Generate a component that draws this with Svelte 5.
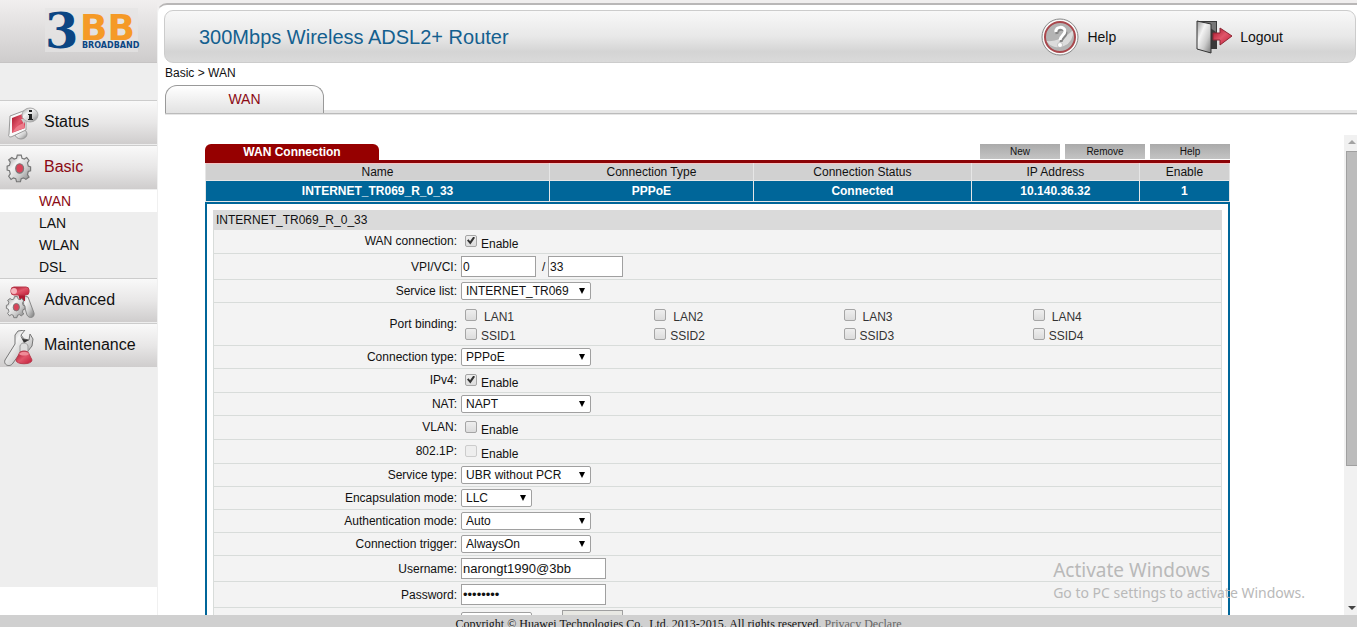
<script lang="ts">
  interface Field {
    id: string;
    label: string;
    kind: 'check' | 'select' | 'text' | 'password' | 'pair' | 'ports';
    value?: string;
    second?: string;
    checked?: boolean;
    disabled?: boolean;
    size?: string;
  }

  const submenu = ['WAN', 'LAN', 'WLAN', 'DSL'];
  const actions = ['New', 'Remove', 'Help'];
  const ports = ['LAN1', 'LAN2', 'LAN3', 'LAN4', 'SSID1', 'SSID2', 'SSID3', 'SSID4'];

  const connections = [
    {
      name: 'INTERNET_TR069_R_0_33',
      type: 'PPPoE',
      status: 'Connected',
      ip: '10.140.36.32',
      enable: 1
    }
  ];

  const fields: Field[] = [
    { id: 'wan', label: 'WAN connection:', kind: 'check', checked: true },
    { id: 'vpi', label: 'VPI/VCI:', kind: 'pair', value: '0', second: '33' },
    { id: 'services', label: 'Service list:', kind: 'select', value: 'INTERNET_TR069' },
    { id: 'ports', label: 'Port binding:', kind: 'ports' },
    { id: 'conntype', label: 'Connection type:', kind: 'select', value: 'PPPoE' },
    { id: 'ipv4', label: 'IPv4:', kind: 'check', checked: true },
    { id: 'nat', label: 'NAT:', kind: 'select', value: 'NAPT' },
    { id: 'vlan', label: 'VLAN:', kind: 'check' },
    { id: 'priority', label: '802.1P:', kind: 'check', disabled: true },
    { id: 'servicetype', label: 'Service type:', kind: 'select', value: 'UBR without PCR' },
    { id: 'encap', label: 'Encapsulation mode:', kind: 'select', value: 'LLC', size: 'small' },
    { id: 'auth', label: 'Authentication mode:', kind: 'select', value: 'Auto' },
    { id: 'trigger', label: 'Connection trigger:', kind: 'select', value: 'AlwaysOn' },
    { id: 'username', label: 'Username:', kind: 'text', value: 'narongt1990@3bb' },
    { id: 'password', label: 'Password:', kind: 'password', value: 'password' }
  ];
</script>

{#snippet gear()}
  <path
    d="M12 1h5l1 4 3 1 3-2 3 4-2 3 1 4 3 1v5l-3 1-1 4 2 3-4 3-3-2-3 1-1 4h-5l-1-4-3-1-3 2-3-4 2-3-1-4-3-1v-5l3-1 1-4-2-3 4-3 3 2 3-1z"
    fill="url(#metal)"
    stroke="#777"
    stroke-width="1.5"
  />
  <ellipse cx="15" cy="18" rx="5" ry="6" fill="#d8455a" stroke="#777" stroke-width="1.5" />
{/snippet}

<svg class="defs" width="0" height="0" aria-hidden="true">
  <defs>
    <linearGradient id="metal" x1="0" y1="0" x2="1" y2="1">
      <stop offset="0" stop-color="#999" />
      <stop offset="0.35" stop-color="#f4f4f4" />
      <stop offset="0.65" stop-color="#ccc" />
      <stop offset="1" stop-color="#777" />
    </linearGradient>
    <linearGradient id="red" x1="0" y1="0" x2="1" y2="1">
      <stop offset="0" stop-color="#a30f25" />
      <stop offset="0.5" stop-color="#e0566a" />
      <stop offset="1" stop-color="#c21b38" />
    </linearGradient>
  </defs>
</svg>

<div class="shell">
  <div class="body">
    <aside class="sidebar">
      <div class="brand">
        <svg width="98" height="44" viewBox="0 0 98 44" role="img" aria-label="3BB Broadband">
          <rect width="93" height="44" fill="#e6e4e4" opacity="0.7" />
          <text x="0" y="40" class="logo-three">3</text>
          <text x="35" y="32" class="logo-bb">BB</text>
          <text x="37" y="40" class="logo-sub">BROADBAND</text>
        </svg>
      </div>

      <nav class="menu">
        <a class="item" href="#status">
          <svg width="36" height="36" viewBox="0 1 36 36">
            <ellipse cx="17" cy="28" rx="6" ry="5" fill="url(#metal)" stroke="#999" />
            <path d="M6 10L22 4v20L7 31c-2 0-3-1-2-3z" fill="#fafafa" stroke="#999" />
            <path d="M8 12L21 7v15L8 27z" fill="url(#red)" />
            <path d="M20 17c-4 1-9 4-11 9l12-4z" fill="#ec7c8b" />
            <path d="M17 13h5l-2 5z" fill="#ccc" />
            <ellipse cx="26" cy="9" rx="8" ry="7" fill="url(#metal)" stroke="#aaa" />
            <path d="M25 4h3v2h-3zM24 8h4v5h1v1h-5v-1h1V9h-1z" fill="#222" />
          </svg>
          Status
        </a>
        <a class="item current" href="#basic">
          <svg width="36" height="36" viewBox="-5 -3 46 46">{@render gear()}</svg>
          Basic
        </a>
        <ul class="submenu">
          {#each submenu as entry}
            <li><a class:active={entry === 'WAN'} href="#{entry.toLowerCase()}">{entry}</a></li>
          {/each}
        </ul>
        <a class="item" href="#advanced">
          <svg width="36" height="36" viewBox="1 1 36 36">
            <path d="M18 11l7 2 6 16c1 5-5 6-7 2z" fill="url(#metal)" stroke="#888" />
            <path d="M15 10h7v7h-5z" fill="#b01831" />
            <rect x="8" y="3" width="18" height="8" rx="3" fill="url(#red)" stroke="#b83b4d" />
            <ellipse cx="11" cy="7" rx="3" ry="3" fill="#f6b5bd" />
            <g transform="translate(4 12) scale(.62)">{@render gear()}</g>
          </svg>
          Advanced
        </a>
        <a class="item" href="#maintenance">
          <svg width="36" height="36" viewBox="4 3 36 36">
            <path
              d="M15 8l3-4 7-1-4 5 3 4 5 1 1-6 3 5-1 7-4 5-7 1-8 11c-3 5-10 2-8-3l10-16z"
              fill="url(#metal)"
              stroke="#777"
            />
            <path d="M20 8l3 4 6 1-5 3z" fill="#333" />
            <path d="M20 19c1-4 7-4 8 0v6h-8z" fill="#ddd" stroke="#999" />
            <path d="M19 27c0-4 10-4 10 0l3 6c0 5-16 5-16 0z" fill="url(#red)" stroke="#b83b4d" />
            <path d="M19 27c2-3 8-3 10 0-2 2-8 2-10 0z" fill="#f08c98" />
          </svg>
          Maintenance
        </a>
      </nav>
    </aside>

    <div class="stage">
      <main class="main">
        <header class="banner">
          <h1>300Mbps Wireless ADSL2+ Router</h1>
          <a class="tool" href="#help">
            <svg width="38" height="38" viewBox="0 0 38 38">
              <circle cx="19" cy="19" r="18" fill="#fafafa" stroke="#888" />
              <circle cx="19" cy="19" r="15" fill="#b4b4b4" />
              <path d="M5 23c8 1 20-3 27-11a15 15 0 0 1-27 11z" fill="#dcdcdc" />
              <circle cx="19" cy="19" r="15" fill="none" stroke="#a9474c" stroke-width="2" />
              <path
                d="M15 15c-1-6 9-6 9-1 0 4-5 5-5 9"
                fill="none"
                stroke="#858585"
                stroke-width="3"
                transform="translate(1 1)"
              />
              <path d="M15 14c-1-6 9-6 9-1 0 4-5 5-5 9" fill="none" stroke="#fff" stroke-width="3" />
              <circle cx="19" cy="27" r="2.5" fill="#fff" stroke="#999" stroke-width=".5" />
            </svg>
            Help
          </a>
          <a class="tool" href="#logout">
            <svg width="36" height="34" viewBox="0 0 36 34">
              <path d="M1 1h20v28H1z" fill="#3a3a3a" />
              <path d="M6 2h14v10z" fill="#777" />
              <path d="M1 1l14 3v29L1 29z" fill="url(#metal)" stroke="#333" />
              <path d="M17 13h7V8l12 8-12 9v-5h-7z" fill="url(#red)" stroke="#8d2634" />
            </svg>
            Logout
          </a>
        </header>

        <div class="crumbs">Basic &gt; WAN</div>
        <div class="tabs"><a class="tab" href="#wan">WAN</a></div>

        <div class="viewport">
          <section class="panel">
            <div class="panel-top">
              <h2>WAN Connection</h2>
              <div class="actions">
                {#each actions as action}
                  <button type="button">{action}</button>
                {/each}
              </div>
            </div>

            <table>
              <colgroup>
                <col class="c-name" /><col class="c-type" /><col class="c-status" />
                <col class="c-ip" /><col />
              </colgroup>
              <thead>
                <tr>
                  <th>Name</th>
                  <th>Connection Type</th>
                  <th>Connection Status</th>
                  <th>IP Address</th>
                  <th>Enable</th>
                </tr>
              </thead>
              <tbody>
                {#each connections as row}
                  <tr>
                    <td>{row.name}</td>
                    <td>{row.type}</td>
                    <td>{row.status}</td>
                    <td>{row.ip}</td>
                    <td>{row.enable}</td>
                  </tr>
                {/each}
              </tbody>
            </table>

            <form class="settings">
              <h3>INTERNET_TR069_R_0_33</h3>
              {#each fields as field}
                <div class="row {field.kind}">
                  {#if field.kind === 'ports'}
                    <span class="label">{field.label}</span>
                    <div class="ports-grid">
                      {#each ports as port}
                        <label class:lan={port.startsWith('LAN')}>
                          <input type="checkbox" />
                          <span>{port}</span>
                        </label>
                      {/each}
                    </div>
                  {:else}
                    <label class="label" for={field.id}>{field.label}</label>
                    {#if field.kind === 'check'}
                      <input
                        type="checkbox"
                        id={field.id}
                        checked={field.checked}
                        disabled={field.disabled}
                      />
                      <label class="enable" for={field.id}>Enable</label>
                    {:else if field.kind === 'pair'}
                      <input class="short" type="text" id={field.id} value={field.value} />
                      <span class="slash">/</span>
                      <input class="short" type="text" aria-label="VCI" value={field.second} />
                    {:else if field.kind === 'select'}
                      <span class="drop {field.size}">
                        <select id={field.id}><option>{field.value}</option></select>
                      </span>
                    {:else}
                      <input type={field.kind} id={field.id} value={field.value} />
                    {/if}
                  {/if}
                </div>
              {/each}
              <div class="row last">
                <span class="label"></span>
                <span class="drop small"><select></select></span>
                <button type="button"></button>
              </div>
            </form>
          </section>

          <div class="scrollbar" aria-hidden="true">
            <i class="up"></i>
            <div class="track"><div class="thumb"></div></div>
            <i class="down"></i>
          </div>
        </div>
      </main>
    </div>
  </div>

  <footer>
    Copyright © Huawei Technologies Co., Ltd. 2013-2015. All rights reserved.
    <a href="#privacy">Privacy Declare</a>
  </footer>

  <div class="watermark">
    <strong>Activate Windows</strong>
    <span>Go to PC settings to activate Windows.</span>
  </div>
</div>

<style>
  :global(body) {
    margin: 0;
    background: #fff;
  }

  .shell,
  .shell * {
    box-sizing: border-box;
  }

  .shell {
    position: relative;
    display: flex;
    flex-direction: column;
    height: 100vh;
    overflow: hidden;
    color: #111;
    font: 12px/16px 'Liberation Sans', Arial, sans-serif;
  }

  .defs {
    position: absolute;
  }

  a {
    color: inherit;
    text-decoration: none;
  }

  .body {
    display: flex;
    flex: 1;
    min-height: 0;
  }

  /* sidebar */
  .sidebar {
    flex: none;
    width: 157px;
    margin-bottom: 28px;
    background: #eee;
  }

  .brand {
    height: 63px;
    padding: 8px 0 0 45px;
    border-bottom: 1px solid #c6c4c4;
    background: linear-gradient(#f1efef, #cecccc);
  }

  .brand svg {
    display: block;
    overflow: visible;
  }

  .logo-three {
    font: bold 48px 'DejaVu Serif', serif;
    fill: #0b4583;
  }

  .logo-bb {
    font: bold 36px 'DejaVu Sans', sans-serif;
    fill: #f59a27;
  }

  .logo-sub {
    font: bold 8px 'DejaVu Sans', sans-serif;
    fill: #0b4583;
  }

  .menu {
    padding-top: 37px;
  }

  .item {
    display: flex;
    align-items: center;
    gap: 4px;
    height: 45px;
    padding: 0 0 2px 4px;
    border-top: 1px solid #ccc;
    border-bottom: 1px solid #eee;
    background: linear-gradient(#f9f9f9, #e8e7e7 50%, #cfcdcd);
    font-size: 16px;
  }

  .item svg {
    position: relative;
    top: 3px;
  }

  .current {
    color: #8b0a14;
  }

  .submenu {
    margin: 0;
    padding: 0;
    list-style: none;
    font-size: 14px;
    line-height: 22px;
  }

  .submenu a {
    display: block;
    padding-left: 39px;
  }

  .submenu .active {
    background: #fff;
    color: #8b0a14;
  }

  /* header */
  .stage {
    display: flex;
    flex: 1;
    min-width: 0;
    padding-top: 3px;
    background: linear-gradient(#f0eeee 12px, #fff 12px);
  }

  .main {
    display: flex;
    flex: 1;
    flex-direction: column;
    min-width: 0;
    border-top: 2px solid #b9b7b7;
    border-left: 1px solid #f0f0f0;
    border-top-left-radius: 10px;
    background: #fff;
  }

  .banner {
    display: flex;
    align-items: center;
    height: 53px;
    margin: 5px 1px 0 6px;
    padding: 0 72px 0 34px;
    border: 1px solid #ccc;
    border-radius: 9px;
    background: linear-gradient(#f8f8f8, #e8e8e8 50%, #d4d4d4 80%, #dadada);
  }

  h1 {
    flex: 1;
    margin: 0;
    color: #14608f;
    font-size: 20px;
    font-weight: normal;
    line-height: 24px;
  }

  .tool {
    display: flex;
    align-items: center;
    gap: 8px;
    font-size: 14px;
  }

  .tool + .tool {
    margin-left: 80px;
  }

  .crumbs {
    padding: 2px 0 4px 7px;
  }

  .tabs {
    height: 30px;
    margin-left: 7px;
    border-bottom: 1px solid #e6e6e6;
    background: linear-gradient(#fff 25px, #e6e6e6 25px 28px, #bbb 28px);
  }

  .tab {
    display: block;
    width: 159px;
    height: 28px;
    border: 1px solid #999;
    border-bottom: 0;
    border-radius: 12px 12px 0 0;
    background: linear-gradient(#fff, #e2e2e2);
    color: #8b0a14;
    font-size: 14px;
    line-height: 26px;
    text-align: center;
  }

  .viewport {
    display: flex;
    flex: 1;
    justify-content: space-between;
    min-height: 0;
    padding-top: 20px;
    overflow: hidden;
  }

  /* connection panel */
  .panel {
    flex: 1;
    margin: 9px 115px 0 47px;
  }

  .panel-top {
    display: flex;
    justify-content: space-between;
    align-items: flex-start;
    border-bottom: 3px solid #8b0306;
  }

  h2 {
    width: 174px;
    margin: 0;
    border-radius: 6px 6px 0 0;
    background: #960000;
    color: #fff;
    font-size: 12px;
    line-height: 16px;
    text-align: center;
  }

  .actions {
    display: flex;
    gap: 5px;
  }

  .actions button {
    width: 80px;
    height: 15px;
    padding: 0;
    border: 0;
    background: linear-gradient(#aaa, #c4c4c4);
    color: #111;
    font: 10px/15px 'Liberation Sans', Arial, sans-serif;
  }

  table {
    width: 100%;
    border-top: 1px solid #f6c4c4;
    border-collapse: collapse;
    table-layout: fixed;
    text-align: center;
  }

  .c-name {
    width: 33.6%;
  }

  .c-type {
    width: 19.9%;
  }

  .c-status {
    width: 21.3%;
  }

  .c-ip {
    width: 16.4%;
  }

  th,
  td {
    padding: 0;
    border: 1px solid #e6e6e6;
    border-top: 0;
  }

  th {
    height: 17px;
    background: #d1d1d1;
    font-weight: normal;
  }

  td {
    height: 21px;
    padding-bottom: 1px;
    background: #069;
    color: #fff;
    font-weight: bold;
  }

  /* settings form */
  .settings {
    padding: 6px 6px 0;
    border: 2px solid #069;
    border-bottom: 0;
  }

  h3 {
    margin: 0;
    padding: 2px 3px;
    background: #dadada;
    font-size: 12px;
    font-weight: normal;
    line-height: 16px;
  }

  .row {
    display: flex;
    align-items: center;
    min-height: 23px;
    border: 1px solid #d8dcda;
    border-top: 0;
    background: #f3f3f3;
  }

  .label {
    flex: none;
    width: 243px;
    margin-right: 4px;
    text-align: right;
  }

  .check {
    height: 24px;
    padding-bottom: 2px;
  }

  .pair,
  .text,
  .password {
    height: 26px;
  }

  input[type='checkbox'] {
    display: inline-grid;
    flex: none;
    place-content: center;
    appearance: none;
    width: 12px;
    height: 12px;
    margin: 0 4px;
    border: 1px solid #a5a5a5;
    border-radius: 2px;
    background: linear-gradient(#eee, #dcdcdc);
  }

  input[type='checkbox']:checked::before {
    content: '';
    width: 8px;
    height: 8px;
    background: #333;
    clip-path: polygon(0 50%, 20% 35%, 38% 60%, 80% 0, 100% 15%, 42% 100%);
  }

  input[type='checkbox']:disabled {
    border-color: #ccc;
    background: #eee;
  }

  .enable {
    padding-top: 6px;
  }

  .ports {
    height: 43px;
  }

  .ports-grid {
    display: grid;
    flex: 1;
    grid-template-columns: repeat(4, 1fr);
    padding-right: 3px;
  }

  .ports-grid label {
    display: flex;
    align-items: center;
    height: 19px;
    color: #333;
  }

  .ports-grid span {
    padding-top: 4px;
  }

  .lan span {
    padding-left: 3px;
  }

  input[type='text'],
  input[type='password'] {
    width: 145px;
    height: 21px;
    padding: 0 1px;
    border: 1px solid #a0a0a0;
    background: #fff;
    color: #111;
    font: 13px 'Liberation Sans', Arial, sans-serif;
  }

  input.short {
    width: 75px;
    font-size: 12px;
  }

  .slash {
    width: 12px;
    padding-left: 6px;
  }

  .drop {
    position: relative;
    width: 130px;
  }

  .drop.small {
    width: 71px;
  }

  .drop::after {
    content: '';
    position: absolute;
    top: 6px;
    right: 6px;
    border: solid transparent;
    border-width: 6px 3px 0;
    border-top-color: #000;
    pointer-events: none;
  }

  select {
    display: block;
    appearance: none;
    width: 100%;
    height: 18px;
    padding: 0 4px;
    border: 1px solid #a0a0a0;
    border-radius: 2px;
    background: #fff;
    color: #111;
    font: 12px/16px 'Liberation Sans', Arial, sans-serif;
  }

  .last {
    align-items: flex-start;
    height: 26px;
    padding-top: 2px;
  }

  .last .drop {
    margin: 2px 30px 0 0;
  }

  .last button {
    width: 61px;
    height: 20px;
    border: 1px solid #a0a0a0;
    background: #e8e8e3;
  }

  /* scrollbar */
  .scrollbar {
    display: flex;
    flex: none;
    flex-direction: column;
    align-items: flex-end;
    width: 13px;
    margin-left: -1px;
    background: #f1f1f1;
  }

  .scrollbar i {
    width: 0;
    margin: 5px 1px;
    border: solid transparent;
    border-width: 0 4px 4px;
    border-bottom-color: #a3a3a3;
  }

  .scrollbar .down {
    border-width: 4px 4px 0;
    border-top-color: #444;
  }

  .track {
    flex: 1;
    width: 11px;
    padding-top: 2px;
  }

  .thumb {
    height: 70%;
    border: 1px solid #a0a0a0;
    border-right: 0;
    background: #bcbcbc;
  }

  footer {
    flex: none;
    height: 12px;
    overflow: hidden;
    background: #d0d0d0;
    font: 12px/18px 'Liberation Serif', 'Times New Roman', serif;
    text-align: center;
  }

  footer a {
    color: #666;
  }

  .watermark {
    position: absolute;
    right: 52px;
    bottom: 24px;
    display: flex;
    flex-direction: column;
    color: #b9b9b9;
    font: 14px/20px 'Noto Sans', 'Segoe UI', sans-serif;
    pointer-events: none;
  }

  .watermark strong {
    font-size: 19px;
    font-weight: normal;
    line-height: 26px;
  }
</style>
